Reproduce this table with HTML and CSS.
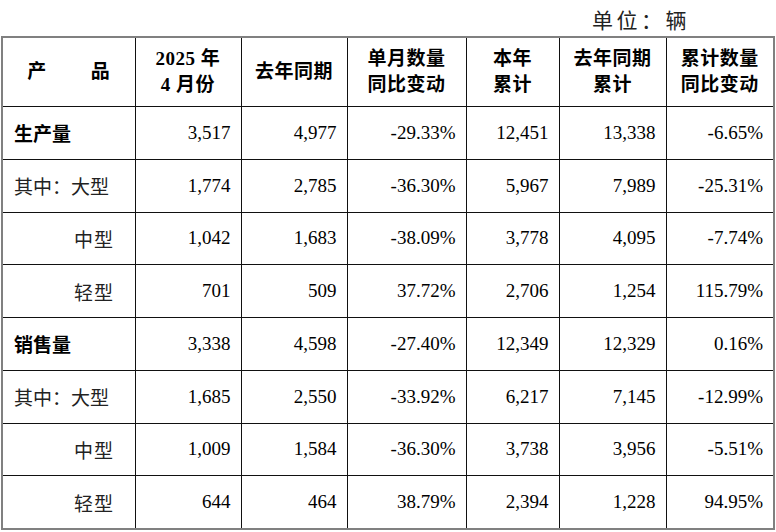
FILE: index.html
```html
<!DOCTYPE html>
<html lang="zh-CN">
<head>
<meta charset="utf-8">
<title>产销数据</title>
<link rel="stylesheet" href="styles.css">
</head>
<body>
<div class="unit">单位：辆</div>
<table class="data">
  <colgroup>
    <col class="c1"><col class="c2"><col class="c3"><col class="c4"><col class="c5"><col class="c6"><col class="c7">
  </colgroup>
  <thead>
    <tr>
      <th>产<span class="gap"></span>品</th>
      <th>2025 年<br>4 月份</th>
      <th>去年同期</th>
      <th>单月数量<br>同比变动</th>
      <th>本年<br>累计</th>
      <th>去年同期<br>累计</th>
      <th>累计数量<br>同比变动</th>
    </tr>
  </thead>
  <tbody>
    <tr><td class="lbl main">生产量</td><td>3,517</td><td>4,977</td><td>-29.33%</td><td>12,451</td><td>13,338</td><td>-6.65%</td></tr>
    <tr><td class="lbl">其中：大型</td><td>1,774</td><td>2,785</td><td>-36.30%</td><td>5,967</td><td>7,989</td><td>-25.31%</td></tr>
    <tr><td class="lbl sub">中型</td><td>1,042</td><td>1,683</td><td>-38.09%</td><td>3,778</td><td>4,095</td><td>-7.74%</td></tr>
    <tr><td class="lbl sub">轻型</td><td>701</td><td>509</td><td>37.72%</td><td>2,706</td><td>1,254</td><td>115.79%</td></tr>
    <tr><td class="lbl main">销售量</td><td>3,338</td><td>4,598</td><td>-27.40%</td><td>12,349</td><td>12,329</td><td>0.16%</td></tr>
    <tr><td class="lbl">其中：大型</td><td>1,685</td><td>2,550</td><td>-33.92%</td><td>6,217</td><td>7,145</td><td>-12.99%</td></tr>
    <tr><td class="lbl sub">中型</td><td>1,009</td><td>1,584</td><td>-36.30%</td><td>3,738</td><td>3,956</td><td>-5.51%</td></tr>
    <tr><td class="lbl sub">轻型</td><td>644</td><td>464</td><td>38.79%</td><td>2,394</td><td>1,228</td><td>94.95%</td></tr>
  </tbody>
</table>
</body>
</html>
```
FILE: styles.css
```css
html, body {
  margin: 0;
  padding: 0;
  background: #fff;
}
body {
  font-family: "Liberation Serif", "Noto Sans CJK SC", serif;
  color: #000;
}
.unit {
  height: 36px;
  line-height: 38px;
  text-align: right;
  padding-right: 86px;
  font-family: "Noto Sans CJK SC", sans-serif;
  font-size: 21px;
  letter-spacing: 3.5px;
  color: #222;
}
.data {
  margin-left: 1px;
  width: 772px;
  table-layout: fixed;
  border-collapse: collapse;
  border: 2px solid #808080;
  font-size: 19px;
}
.c1 { width: 133px; }
.c2 { width: 106px; }
.c3 { width: 106px; }
.c4 { width: 119px; }
.c5 { width: 93px; }
.c6 { width: 107px; }
.c7 { width: 108px; }
.data th, .data td {
  border: 1px solid #111;
  padding: 0 10px 0 0;
}
.data th {
  height: 68px;
  padding: 0;
  text-align: center;
  font-weight: 700;
  line-height: 26px;
  letter-spacing: 0.5px;
  font-family: "Liberation Serif", "Noto Sans CJK SC", serif;
}
.gap {
  display: inline-block;
  width: 44px;
}
.data td {
  height: 51.75px;
  text-align: right;
  vertical-align: middle;
}
.data td.lbl {
  text-align: left;
  padding-left: 11px;
  font-family: "Noto Sans CJK SC", sans-serif;
  color: #222;
}
.data td.main {
  font-weight: 700;
  color: #000;
}
.data td.sub {
  padding-left: 71px;
  letter-spacing: 1px;
}
```
